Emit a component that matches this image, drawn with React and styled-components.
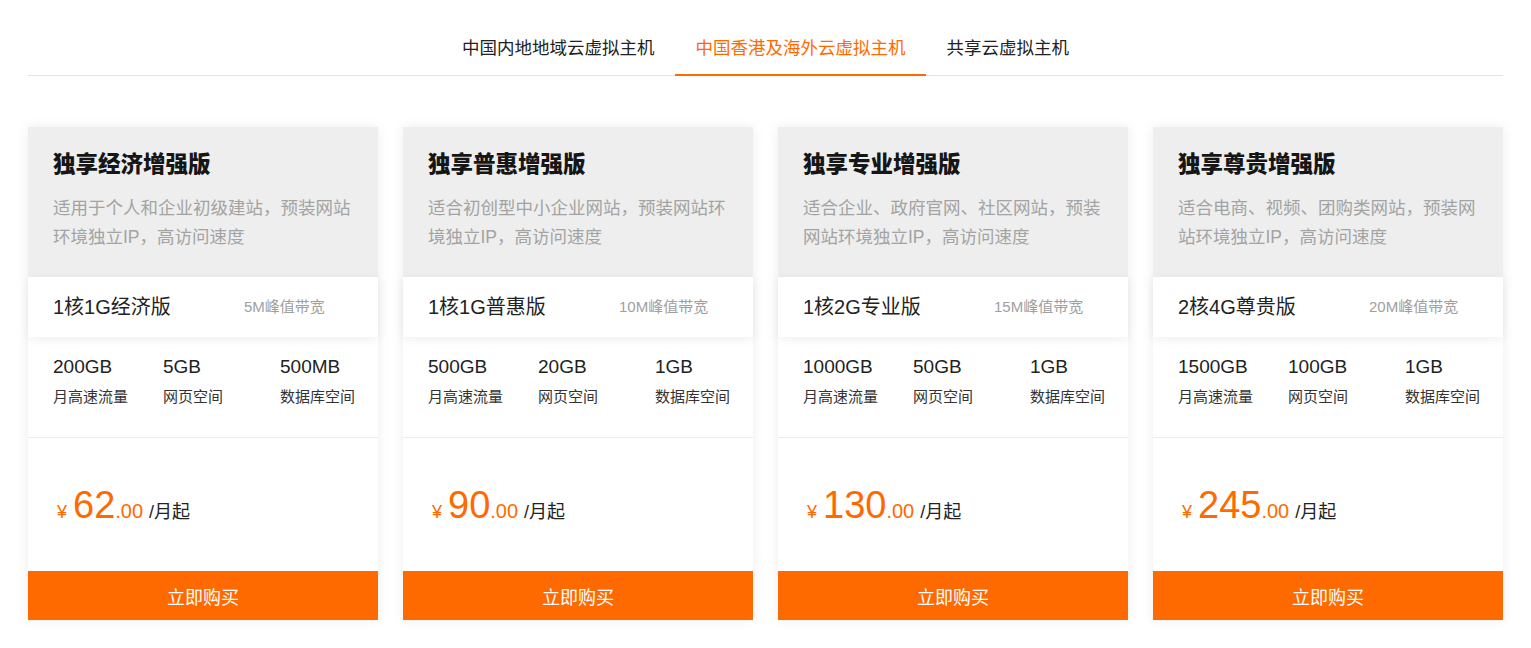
import styled, { createGlobalStyle } from 'styled-components';

const GlobalStyle = createGlobalStyle`
    body{
        margin: 0;
        background: #fff;
        font-family: "Liberation Sans", Arial, "Noto Sans CJK SC", sans-serif;
    }
`

const plans = [
    {
        title: '独享经济增强版',
        desc: '适用于个人和企业初级建站，预装网站环境独立IP，高访问速度',
        name: '1核1G经济版',
        band: '5M峰值带宽',
        stats: [['200GB', '月高速流量'], ['5GB', '网页空间'], ['500MB', '数据库空间']],
        price: '62',
    },
    {
        title: '独享普惠增强版',
        desc: '适合初创型中小企业网站，预装网站环境独立IP，高访问速度',
        name: '1核1G普惠版',
        band: '10M峰值带宽',
        stats: [['500GB', '月高速流量'], ['20GB', '网页空间'], ['1GB', '数据库空间']],
        price: '90',
    },
    {
        title: '独享专业增强版',
        desc: '适合企业、政府官网、社区网站，预装网站环境独立IP，高访问速度',
        name: '1核2G专业版',
        band: '15M峰值带宽',
        stats: [['1000GB', '月高速流量'], ['50GB', '网页空间'], ['1GB', '数据库空间']],
        price: '130',
    },
    {
        title: '独享尊贵增强版',
        desc: '适合电商、视频、团购类网站，预装网站环境独立IP，高访问速度',
        name: '2核4G尊贵版',
        band: '20M峰值带宽',
        stats: [['1500GB', '月高速流量'], ['100GB', '网页空间'], ['1GB', '数据库空间']],
        price: '245',
    },
]

const tabs = ['中国内地地域云虚拟主机', '中国香港及海外云虚拟主机', '共享云虚拟主机']

const Page = styled.div`
    padding: 21px 28px 27px;
`

const TabBar = styled.nav`
    display: flex;
    justify-content: center;
    border-bottom: 1px solid #e3e3e3;
`

const Tab = styled.div`
    padding: 0 20.5px;
    height: 53px;
    line-height: 54px;
    font-size: 17.5px;
    color: ${props => props.$active ? '#ff6a00' : '#222'};
    border-bottom: 2px solid ${props => props.$active ? '#ff6a00' : 'transparent'};
    margin-bottom: -1px;
    cursor: pointer;
`

const Cards = styled.div`
    display: grid;
    grid-template-columns: repeat(4, 350px);
    gap: 25px;
    margin-top: 51px;
`

const Card = styled.div`
    display: flex;
    flex-direction: column;
    background: #fff;
    box-shadow: 0 0 12px rgba(0,0,0,.07);
`

const Head = styled.div`
    background: #eeeeee;
    padding: 23px 25px 24px;
    height: 150px;
    box-sizing: border-box;
    h3{
        margin: 0;
        font-size: 22.5px;
        line-height: 30px;
        font-weight: 900;
        color: #161616;
    }
    p{
        margin: 14px 0 0;
        font-size: 17.5px;
        line-height: 29px;
        color: #a3a3a3;
    }
`

const Spec = styled.div`
    display: grid;
    grid-template-columns: 191px auto;
    align-items: center;
    height: 60px;
    padding: 0 25px 3px;
    box-sizing: border-box;
    background: #fff;
    box-shadow: 0 2px 10px rgba(0,0,0,.07);
    position: relative;
    .name{
        font-size: 20px;
        color: #222;
    }
    .band{
        font-size: 15px;
        color: #a0a0a0;
    }
`

const Stats = styled.div`
    display: grid;
    grid-template-columns: 110px 117px auto;
    padding: 18px 25px 30px;
    border-bottom: 1px solid #ececec;
`

const Stat = styled.div`
    display: flex;
    flex-direction: column;
    gap: 8px;
    white-space: nowrap;
    b{
        font-weight: normal;
        font-size: 19px;
        line-height: 24px;
        color: #222;
    }
    span{
        font-size: 15px;
        line-height: 20px;
        color: #333;
    }
`

const PriceRow = styled.div`
    flex: none;
    height: 133px;
    display: flex;
    align-items: center;
    padding: 0 29px;
    color: #ff6a00;
    .cur{
        font-size: 18px;
        margin-right: 6px;
    }
    .int{
        font-size: 38px;
        line-height: 1;
    }
    .dec{
        font-size: 20px;
        margin-right: 6px;
    }
    .unit{
        font-size: 18px;
        color: #222;
    }
`

const Row = styled.div`
    display: flex;
    align-items: baseline;
`

const BuyBtn = styled.button`
    border: 0;
    height: 49px;
    background: #ff6a00;
    color: #fff;
    font-family: inherit;
    font-size: 18px;
    cursor: pointer;
`

export default function App(){
    return(
        <Page>
            <GlobalStyle />
            <TabBar>
                {tabs.map((t, i) => <Tab key={t} $active={i === 1}>{t}</Tab>)}
            </TabBar>
            <Cards>
                {plans.map(p => (
                    <Card key={p.title}>
                        <Head>
                            <h3>{p.title}</h3>
                            <p>{p.desc}</p>
                        </Head>
                        <Spec>
                            <span className='name'>{p.name}</span>
                            <span className='band'>{p.band}</span>
                        </Spec>
                        <Stats>
                            {p.stats.map(([v, l]) => (
                                <Stat key={l}>
                                    <b>{v}</b>
                                    <span>{l}</span>
                                </Stat>
                            ))}
                        </Stats>
                        <PriceRow>
                            <Row>
                                <span className='cur'>¥</span>
                                <span className='int'>{p.price}</span>
                                <span className='dec'>.00</span>
                                <span className='unit'>/月起</span>
                            </Row>
                        </PriceRow>
                        <BuyBtn>立即购买</BuyBtn>
                    </Card>
                ))}
            </Cards>
        </Page>
    )
}
